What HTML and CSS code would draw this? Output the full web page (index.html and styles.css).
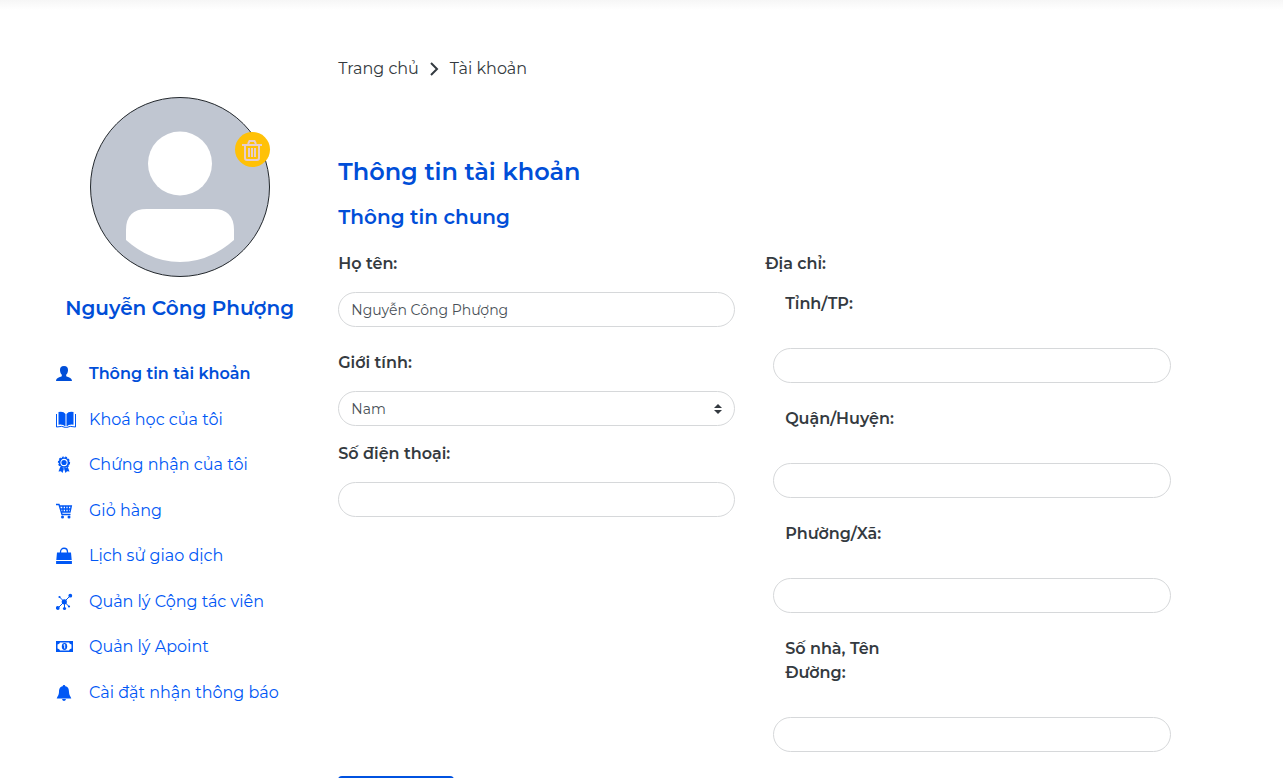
FILE: index.html
```html
<!DOCTYPE html>
<html lang="vi">
<head>
<meta charset="utf-8">
<meta name="viewport" content="width=device-width, initial-scale=1">
<title>Thông tin tài khoản</title>
<link rel="stylesheet" href="styles.css">
</head>
<body>
<div class="top-shadow"></div>
<div class="page">
  <aside class="sidebar">
    <div class="avatar">
      <svg class="avatar-image" viewBox="0 0 180 180" aria-hidden="true">
        <circle cx="90" cy="90" r="89.5" fill="#c0c6d1" stroke="#22272c"/>
        <circle cx="90" cy="66.500" r="32" fill="#fff"/>
        <path d="M36 143V133Q36 112 57 112H123Q144 112 144 133V143Q119 165 90 165Q61 165 36 143Z" fill="#fff"/>
      </svg>
      <button class="avatar-delete" type="button" aria-label="Xoá ảnh">
        <svg width="20" height="22" viewBox="0 0 20 22" fill="none" stroke="#e5cdd0" stroke-width="2" aria-hidden="true">
          <path d="M0 6H20M6 5L7.500 2H12.500L14 5M3 6V19Q3 21 5 21H15Q17 21 17 19V6M7 9V18M10 9V18M13 9V18"/>
        </svg>
      </button>
    </div>
    <p class="user-name">Nguyễn Công Phượng</p>
    <nav class="menu">
      <a class="menu-item active" href="#"><svg class="icon" viewBox="0 0 20 18"><path d="M8 1C11 1 12.300 2.800 12 5.500C11.800 8 11 9 10.200 9.700V11C10.500 12.200 16 12 16 16H0C0 12 5.500 12.200 5.800 11V9.700C5 9 4.200 8 4 5.500C3.700 2.800 5 1 8 1Z"/></svg>Thông tin tài khoản</a>
      <a class="menu-item" href="#"><svg class="icon" viewBox="0 0 20 18"><path d="M2.500 1Q7.500 0 9.500 3V15.500Q7 13 2.500 13.700ZM17.500 1Q12.500 0 10.500 3V15.500Q13 13 17.500 13.700Z"/><path d="M.5 3V16Q6.500 14.500 9.500 16.500H10.500Q13.500 14.500 19.500 16V3" fill="none" stroke="currentColor"/></svg>Khoá học của tôi</a>
      <a class="menu-item" href="#"><svg class="icon" viewBox="0 0 20 18"><circle cx="8" cy="6.500" r="4.500" fill="none" stroke="currentColor" stroke-width="1.700"/><circle cx="8" cy="6.500" r="5.500" fill="none" stroke="currentColor" stroke-width="1.200" stroke-dasharray="2 1.300"/><circle cx="8" cy="6.500" r="2.600"/><path d="M4.200 11L2.500 15.500L5 15.200L6.500 17L8 12.500L9.500 17L11 15.200L13.500 15.500L11.800 11L8 12.500Z"/></svg>Chứng nhận của tôi</a>
      <a class="menu-item" href="#"><svg class="icon" viewBox="0 0 20 18"><path d="M0 2.500H3L6 12.500H14.500M3.500 4H15.300L14 10H5.300M4.500 7H14.700M7 4V10M9.700 4V10M12.300 4V10" fill="none" stroke="currentColor" stroke-width="1.400"/><circle cx="6.500" cy="15" r="1.500"/><circle cx="13" cy="15" r="1.500"/></svg>Giỏ hàng</a>
      <a class="menu-item" href="#"><svg class="icon" viewBox="0 0 20 18"><path d="M1 5.500H15L15.700 13H.3ZM.1 14H15.900V17H.1Z"/><path d="M4.500 8V5C4.500 0 11.500 0 11.500 5V8" fill="none" stroke="currentColor" stroke-width="1.300"/></svg>Lịch sử giao dịch</a>
      <a class="menu-item" href="#"><svg class="icon" viewBox="0 0 20 18"><path d="M2 15L14 3M3.500 4L13 13.500M8.500 9V15.500" fill="none" stroke="currentColor" stroke-width="1"/><circle cx="8.300" cy="8.800" r="2.600"/><circle cx="14.300" cy="2.700" r="1.900"/><circle cx="1.800" cy="15" r="1.900"/><circle cx="8.500" cy="15.500" r="1.600"/><circle cx="3.500" cy="4" r="1.100"/><circle cx="13" cy="13.500" r="1.100"/></svg>Quản lý Cộng tác viên</a>
      <a class="menu-item" href="#"><svg class="icon" viewBox="0 0 20 18"><path fill-rule="evenodd" d="M0 3H17V14H0ZM4 4.500Q3.700 6.200 1.500 6.500V10.500Q3.700 10.800 4 12.500H13Q13.300 10.800 15.500 10.500V6.500Q13.300 6.200 13 4.500Z"/><ellipse cx="8.500" cy="8.500" rx="2.700" ry="3.400"/><path d="M7.500 7L8.700 6.500V10.500" fill="none" stroke="#fff"/></svg>Quản lý Apoint</a>
      <a class="menu-item" href="#"><svg class="icon" viewBox="0 0 20 18"><path d="M8 1C9 1 9.200 1.600 9.300 2.300C12.300 3 12.900 5 13 8C13.100 11 14.300 12 15.300 14.500H.7C1.700 12 2.900 11 3 8C3.100 5 3.700 3 6.700 2.300C6.800 1.600 7 1 8 1ZM6 15H10Q9.500 17 8 17Q6.500 17 6 15Z"/></svg>Cài đặt nhận thông báo</a>
    </nav>
  </aside>
  <main class="content">
    <nav class="breadcrumb" aria-label="Breadcrumb">
      <a href="#">Trang chủ</a>
      <svg width="9" height="14" viewBox="0 0 9 14" fill="none" stroke="#333a40" stroke-width="2" aria-hidden="true"><path d="M1 1L7 7L1 13"/></svg>
      <a href="#">Tài khoản</a>
    </nav>
    <h1 class="title">Thông tin tài khoản</h1>
    <h2 class="subtitle">Thông tin chung</h2>
    <form class="form">
      <div class="columns">
        <div class="column">
          <div class="field spacious"><label for="name">Họ tên:</label><input class="control" id="name" type="text" value="Nguyễn Công Phượng"></div>
          <div class="field"><label for="gender">Giới tính:</label>
            <div class="select-wrap"><select class="control" id="gender"><option>Nam</option><option>Nữ</option></select>
              <svg class="select-arrow" width="8" height="10" viewBox="0 0 8 10" aria-hidden="true"><path d="M4 0L8 4H0ZM0 6H8L4 10Z" fill="#343a40"/></svg></div></div>
          <div class="field"><label for="phone">Số điện thoại:</label><input class="control" id="phone" type="tel"></div>
        </div>
        <fieldset class="column">
          <legend>Địa chỉ:</legend>
          <div class="address">
            <div class="address-field"><label for="province">Tỉnh/TP:</label><input class="control" id="province" type="text"></div>
            <div class="address-field"><label for="district">Quận/Huyện:</label><input class="control" id="district" type="text"></div>
            <div class="address-field"><label for="ward">Phường/Xã:</label><input class="control" id="ward" type="text"></div>
            <div class="address-field"><label for="street">Số nhà, Tên Đường:</label><input class="control" id="street" type="text"></div>
          </div>
        </fieldset>
      </div>
      <button class="submit" type="submit" aria-label="Cập nhật"></button>
    </form>
  </main>
</div>
</body>
</html>
```
FILE: styles.css
```css
* { box-sizing: border-box; }
body {
  margin: 0;
  background: #fff;
  color: #343a40;
  font: 400 16px/24px Montserrat, Inter, sans-serif;
}
a { color: inherit; text-decoration: none; }
.top-shadow { height: 10px; background: linear-gradient(#f6f6f6, #fff); }
.page {
  display: grid;
  grid-template-columns: 1fr 3fr;
  padding: 0 104px 0 38px;
}
.sidebar { padding: 87px 2px 0 0; }
.avatar { position: relative; width: 180px; height: 180px; margin: 0 auto; }
.avatar-image { display: block; width: 100%; height: 100%; }
.avatar-delete {
  position: absolute;
  top: 35px;
  right: 0;
  display: grid;
  place-items: center;
  width: 35px;
  height: 35px;
  padding: 0;
  border: 0;
  border-radius: 50%;
  background: #ffc107;
}
.user-name {
  margin: 16px 0 39px;
  color: #004ed8;
  font-size: 20px;
  font-weight: 600;
  line-height: 30px;
  text-align: center;
  white-space: nowrap;
}
.menu {
  display: flex;
  flex-direction: column;
  justify-content: space-between;
  min-height: 343px;
  padding-left: 18px;
  color: #0057f5;
}
.menu-item { display: flex; align-items: center; gap: 13px; white-space: nowrap; }
.menu-item.active { color: #004ed8; font-weight: 600; }
.icon { flex: none; width: 20px; height: 18px; fill: currentColor; }
.content { padding: 47px 8px 0 15px; }
.breadcrumb { display: flex; align-items: center; gap: 11px; }
.title, .subtitle { margin: 0; color: #004ed8; font-weight: 600; }
.title { margin-top: 73px; font-size: 24px; line-height: 36px; }
.subtitle { margin: 12px 0 20px; font-size: 20px; line-height: 30px; }
.columns { display: grid; grid-template-columns: 397fr 406fr; gap: 30px; }
.column { display: flex; flex-direction: column; gap: 16px; min-width: 0; margin: 0; padding: 0; border: 0; }
.field { display: grid; gap: 16px; }
.field.spacious { margin-bottom: 8px; }
label, legend { font-size: 16px; font-weight: 600; }
legend { padding: 0; margin-bottom: 16px; }
.address { display: grid; gap: 24px; padding-left: 8px; }
.address-field { display: grid; gap: 32px; }
.address-field label { width: 124px; padding-left: 12px; }
.control {
  display: block;
  width: 100%;
  height: 35px;
  padding: 0 12px;
  border: 1px solid #d6d8da;
  border-radius: 18px;
  background: #fff;
  color: #495057;
  font: inherit;
  font-size: 14px;
}
.select-wrap { position: relative; }
select.control { appearance: none; }
.select-arrow { position: absolute; top: 13px; right: 13px; pointer-events: none; }
.submit {
  display: block;
  width: 116px;
  height: 38px;
  margin-top: 24px;
  border: 0;
  border-radius: 4px;
  background: #0052e0;
}
```
